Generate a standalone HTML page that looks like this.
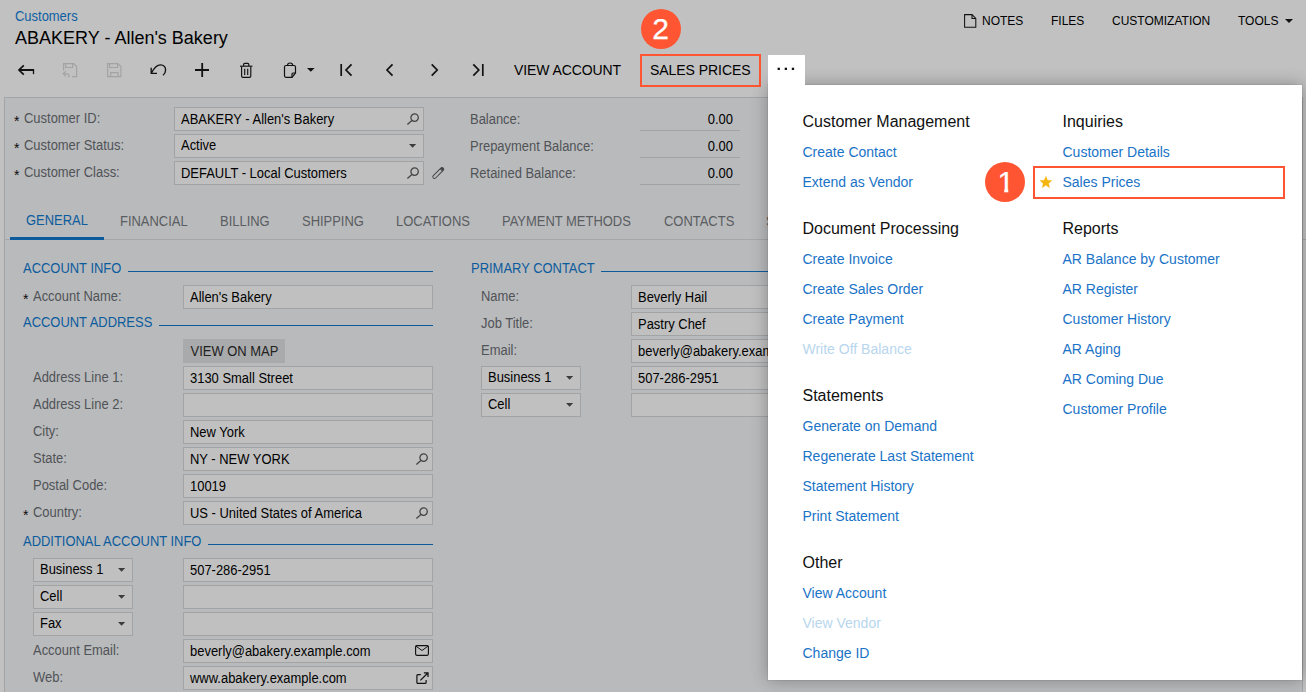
<!DOCTYPE html>
<html lang="en">
<head>
<meta charset="utf-8">
<title>Customers</title>
<style>
*{box-sizing:border-box;margin:0;padding:0}
html,body{width:1306px;height:692px;overflow:hidden}
body{background:#c1c1c1;font-family:"Liberation Sans",Arial,sans-serif;font-size:13px;color:#000;position:relative}
.abs{position:absolute;white-space:nowrap}
svg{position:absolute;overflow:visible}
.crumb{left:15px;top:8px;font-size:14px;color:#0d60a4;line-height:16px;transform:scaleX(.925);transform-origin:0 0}
.title{left:15px;top:28px;font-size:18px;line-height:21px;color:#000}
.tb{top:61px;height:18px;line-height:18px;font-size:14px;color:#000}
.top{top:14px;font-size:12px;line-height:15px;color:#000}
.panel{left:4px;top:97px;width:1299px;height:610px;background:#b9babc;border:1px solid #a3a4a6}
.lbl{font-size:14px;line-height:16px;color:#505357;transform:scaleX(.925);transform-origin:0 0}
.star{font-size:14px;line-height:16px;color:#0a0a0a}
.inp{height:24px;border:1px solid #a2a3a5;background:#c0c0c0;font-size:14px;line-height:24px;padding-left:6px;color:#000;overflow:hidden}
.inp span{display:inline-block;transform:scaleX(.925);transform-origin:0 50%;line-height:22px;vertical-align:top}
.inp.sel span{margin-top:-1px}
.val{font-size:14px;line-height:16px;color:#000;text-align:right;transform:scaleX(.925);transform-origin:100% 0}
.uline{height:1px;background:#a2a3a5}
.tab{top:213px;font-size:14px;line-height:16px;color:#5a5d61;transform:scaleX(.925);transform-origin:0 0}
.tab.act{color:#0c5c9d;top:212px}
.sec{font-size:14px;line-height:16px;color:#0c5c9d;transform:scaleX(.925);transform-origin:0 0}
.sline{height:1px;background:#0c5c9d}
.caret{width:0;height:0;border-left:4px solid transparent;border-right:4px solid transparent;border-top:4px solid #333}
.btn{height:24px;background:#a9aaab;font-size:14px;line-height:25px;text-align:center;color:#222}
.btn span{display:inline-block;transform:scaleX(.925)}
.popup{left:768px;top:85px;width:534px;height:595px;background:#fff;box-shadow:0 0 0 1px rgba(0,0,0,.05),0 0 16px rgba(0,0,0,.3)}
.more{left:768px;top:55px;width:37px;height:31px;background:#fff}
.h{font-size:16px;line-height:19px;color:#111}
.a{font-size:14px;line-height:17px;color:#1a73c7}
.a.dis{color:#b8d6ee}
.obox{border:2px solid #ff5533}
.badge{width:40px;height:40px;border-radius:50%;background:#ff5533;color:#fff;font-size:30px;line-height:40px;text-align:center;-webkit-text-stroke:0.25px #fff}
.badge span{display:inline-block;transform:none}
</style>
</head>
<body>
<div class="abs crumb">Customers</div>
<div class="abs title">ABAKERY - Allen's Bakery</div>
<svg style="left:963px;top:13px" width="15" height="16" viewBox="0 0 15 16"><path d="M1.6 1.6h7.4l3.8 3.8v8.8H1.6z" fill="none" stroke="#111" stroke-width="1.05"/><path d="M9 1.6v3.8h3.8" fill="none" stroke="#111" stroke-width="1.05"/></svg>
<div class="abs top" style="left:982px">NOTES</div>
<div class="abs top" style="left:1051px">FILES</div>
<div class="abs top" style="left:1112px">CUSTOMIZATION</div>
<div class="abs top" style="left:1238px">TOOLS</div>
<div class="abs caret" style="left:1285px;top:19px;border-left-width:4px;border-right-width:4px;border-top-width:4px;border-top-color:#111"></div>
<svg style="left:0;top:50px" width="520" height="40" viewBox="0 50 520 40" fill="none" stroke="#111" stroke-width="2">
<path d="M23.8 65.4 L19 70 L23.8 74.6" stroke-width="1.7"/><path d="M19.2 70 H34.1" stroke-width="2"/><path d="M33.5 70V74.2" stroke-width="1.3"/>
<g stroke="#a3a3a3" stroke-width="1.2"><path d="M63.6 70.5V63.6h10l3 3v10h-4.6"/><path d="M65.6 63.6v3.9h7v-3.9"/><path d="M65.8 71.2l-2.6 2.6 2.6 2.6M63.4 73.8h4.2q1.2 0 1.2 1.2v2.4"/></g>
<g stroke="#a3a3a3" stroke-width="1.2"><path d="M107.6 63.6h10.3l3 3v10h-13.3z"/><path d="M109.6 63.6v3.9h8v-3.9"/><path d="M110.6 76.6v-4h7.4v4"/></g>
<path d="M151.2 67.8 V73.3 H157 M151.6 72.8 C154 68 157 64.8 160.5 64.8 C164 64.8 165.6 67.6 165.6 70 C165.6 72 164.6 74 163 75.3" stroke-width="1.35"/>
<path d="M195 70H209M202.2 63V77" stroke-width="1.8"/>
<g stroke-width="1.15"><path d="M240 66.2H252.4"/><path d="M243.6 66v-1.6q0-1 1-1h3.2q1 0 1 1V66"/><path d="M241.6 66.4V76q0 1.3 1.3 1.3h6.6q1.3 0 1.3-1.3V66.4"/><path d="M244.7 68.8V75M247.7 68.8V75"/></g>
<g stroke-width="1.2"><path d="M292 77.3H286q-1.5 0-1.5-1.5V67q0-1.5 1.5-1.5h8q1.5 0 1.5 1.5V73z"/><path d="M292 77.3V74q0-1 1-1h2.5"/><path d="M287.5 65.3q0-2.3 2.6-2.3t2.6 2.3"/></g>
<path d="M307 68h7.6l-3.8 3.8z" fill="#111" stroke="none"/>
<path d="M341.2 64V76M351.5 64.3L346 70l5.5 5.7" stroke-width="1.7"/>
<path d="M392.5 64.3L387 70l5.5 5.7" stroke-width="1.7"/>
<path d="M431.7 64.3L437.2 70l-5.5 5.7" stroke-width="1.7"/>
<path d="M473.3 64.3L478.8 70l-5.5 5.7M482.8 64V76" stroke-width="1.7"/>
</svg>
<div class="abs tb" style="left:514px;letter-spacing:-0.1px">VIEW ACCOUNT</div>
<div class="abs tb" style="left:650px;letter-spacing:-0.05px">SALES PRICES</div>
<div class="abs obox" style="left:640px;top:54px;width:121px;height:33px"></div>
<div class="abs badge" style="left:640.5px;top:9px"><span>2</span></div>
<div class="abs panel"></div>
<div class="abs star" style="left:14px;top:113px">*</div>
<div class="abs lbl" style="left:24px;top:110px">Customer ID:</div>
<div class="abs star" style="left:14px;top:140px">*</div>
<div class="abs lbl" style="left:24px;top:137px">Customer Status:</div>
<div class="abs star" style="left:14px;top:167px">*</div>
<div class="abs lbl" style="left:24px;top:164px">Customer Class:</div>
<div class="abs inp" style="left:174px;top:107px;width:250px"><span>ABAKERY - Allen's Bakery</span><svg style="right:3px;top:5px" width="14" height="13" viewBox="0 0 14 13"><circle cx="8.6" cy="4.6" r="3.7" fill="none" stroke="#444" stroke-width="1.3"/><path d="M5.9 7.4L1.4 11.6" stroke="#444" stroke-width="1.3"/></svg></div>
<div class="abs inp sel" style="left:174px;top:134px;width:250px"><span>Active</span><svg style="right:7px;top:8.8px" width="7.2" height="3.7" viewBox="0 0 7.2 3.7"><polygon points="0,0 7.2,0 3.6,3.7" fill="#3c3c3c"/></svg></div>
<div class="abs inp" style="left:174px;top:161px;width:250px"><span>DEFAULT - Local Customers</span><svg style="right:3px;top:5px" width="14" height="13" viewBox="0 0 14 13"><circle cx="8.6" cy="4.6" r="3.7" fill="none" stroke="#444" stroke-width="1.3"/><path d="M5.9 7.4L1.4 11.6" stroke="#444" stroke-width="1.3"/></svg></div>
<svg style="left:431px;top:166px" width="15" height="15" viewBox="0 0 15 15"><g transform="rotate(-45 7.2 7)"><rect x="0.2" y="5.4" width="14" height="3.3" rx="1.65" fill="none" stroke="#444" stroke-width="1"/><path d="M11.6 5.4v3.3" stroke="#444" stroke-width="1"/><rect x="12" y="5.4" width="2.2" height="3.3" rx="1.1" fill="#444"/></g></svg>
<div class="abs lbl" style="left:470px;top:111px">Balance:</div>
<div class="abs val" style="left:640px;top:111px;width:93px">0.00</div>
<div class="abs uline" style="left:640px;top:130px;width:100px"></div>
<div class="abs lbl" style="left:470px;top:138px">Prepayment Balance:</div>
<div class="abs val" style="left:640px;top:138px;width:93px">0.00</div>
<div class="abs uline" style="left:640px;top:157px;width:100px"></div>
<div class="abs lbl" style="left:470px;top:165px">Retained Balance:</div>
<div class="abs val" style="left:640px;top:165px;width:93px">0.00</div>
<div class="abs uline" style="left:640px;top:184px;width:100px"></div>
<div class="abs tab act" style="left:26px">GENERAL</div>
<div class="abs tab" style="left:120px">FINANCIAL</div>
<div class="abs tab" style="left:220px">BILLING</div>
<div class="abs tab" style="left:302px">SHIPPING</div>
<div class="abs tab" style="left:396px">LOCATIONS</div>
<div class="abs tab" style="left:502px">PAYMENT METHODS</div>
<div class="abs tab" style="left:664px">CONTACTS</div>
<div class="abs tab" style="left:766px">SALESPERSONS</div>
<div class="abs" style="left:5px;top:239px;width:1301px;height:1px;background:#a6a7a9"></div>
<div class="abs" style="left:10px;top:237px;width:94px;height:3px;background:#0c5c9d"></div>
<div class="abs sec" style="left:23px;top:260px">ACCOUNT INFO</div>
<div class="abs sline" style="left:128px;top:271px;width:305px"></div>
<div class="abs star" style="left:23px;top:291px">*</div>
<div class="abs lbl" style="left:33px;top:288px">Account Name:</div>
<div class="abs inp" style="left:183px;top:285px;width:250px"><span>Allen's Bakery</span></div>
<div class="abs sec" style="left:23px;top:314px">ACCOUNT ADDRESS</div>
<div class="abs sline" style="left:159px;top:325px;width:274px"></div>
<div class="abs btn" style="left:183px;top:339px;width:102px"><span>VIEW ON MAP</span></div>
<div class="abs lbl" style="left:33px;top:369px">Address Line 1:</div>
<div class="abs inp" style="left:183px;top:366px;width:250px"><span>3130 Small Street</span></div>
<div class="abs lbl" style="left:33px;top:396px">Address Line 2:</div>
<div class="abs inp" style="left:183px;top:393px;width:250px"></div>
<div class="abs lbl" style="left:33px;top:423px">City:</div>
<div class="abs inp" style="left:183px;top:420px;width:250px"><span>New York</span></div>
<div class="abs lbl" style="left:33px;top:450px">State:</div>
<div class="abs inp" style="left:183px;top:447px;width:250px"><span>NY - NEW YORK</span><svg style="right:3px;top:5px" width="14" height="13" viewBox="0 0 14 13"><circle cx="8.6" cy="4.6" r="3.7" fill="none" stroke="#444" stroke-width="1.3"/><path d="M5.9 7.4L1.4 11.6" stroke="#444" stroke-width="1.3"/></svg></div>
<div class="abs lbl" style="left:33px;top:477px">Postal Code:</div>
<div class="abs inp" style="left:183px;top:474px;width:250px"><span>10019</span></div>
<div class="abs star" style="left:23px;top:507px">*</div>
<div class="abs lbl" style="left:33px;top:504px">Country:</div>
<div class="abs inp" style="left:183px;top:501px;width:250px"><span>US - United States of America</span><svg style="right:3px;top:5px" width="14" height="13" viewBox="0 0 14 13"><circle cx="8.6" cy="4.6" r="3.7" fill="none" stroke="#444" stroke-width="1.3"/><path d="M5.9 7.4L1.4 11.6" stroke="#444" stroke-width="1.3"/></svg></div>
<div class="abs sec" style="left:23px;top:533px">ADDITIONAL ACCOUNT INFO</div>
<div class="abs sline" style="left:208px;top:544px;width:225px"></div>
<div class="abs inp sel" style="left:33px;top:558px;width:100px"><span>Business 1</span><svg style="right:6.7px;top:8.8px" width="7.2" height="3.7" viewBox="0 0 7.2 3.7"><polygon points="0,0 7.2,0 3.6,3.7" fill="#3c3c3c"/></svg></div>
<div class="abs inp" style="left:183px;top:558px;width:250px"><span>507-286-2951</span></div>
<div class="abs inp sel" style="left:33px;top:585px;width:100px"><span>Cell</span><svg style="right:6.7px;top:8.8px" width="7.2" height="3.7" viewBox="0 0 7.2 3.7"><polygon points="0,0 7.2,0 3.6,3.7" fill="#3c3c3c"/></svg></div>
<div class="abs inp" style="left:183px;top:585px;width:250px"></div>
<div class="abs inp sel" style="left:33px;top:612px;width:100px"><span>Fax</span><svg style="right:6.7px;top:8.8px" width="7.2" height="3.7" viewBox="0 0 7.2 3.7"><polygon points="0,0 7.2,0 3.6,3.7" fill="#3c3c3c"/></svg></div>
<div class="abs inp" style="left:183px;top:612px;width:250px"></div>
<div class="abs lbl" style="left:33px;top:642px">Account Email:</div>
<div class="abs inp" style="left:183px;top:639px;width:250px"><span>beverly@abakery.example.com</span><svg style="right:3px;top:5px" width="14" height="11" viewBox="0 0 14 11"><rect x="0.6" y="0.6" width="12.8" height="9.7" rx="1.2" fill="none" stroke="#111" stroke-width="1.15"/><path d="M0.9 1.1l6.1 4.4 6.1-4.4" fill="none" stroke="#111" stroke-width="1"/></svg></div>
<div class="abs lbl" style="left:33px;top:669px">Web:</div>
<div class="abs inp" style="left:183px;top:666px;width:250px"><span>www.abakery.example.com</span><svg style="right:3px;top:5px" width="14" height="14" viewBox="0 0 14 14"><path d="M5.8 2.7H2.9q-1 0-1 1v6.7q0 1 1 1h7.2q1 0 1-1V8" fill="none" stroke="#111" stroke-width="1.2"/><path d="M5.4 8.4L12.8 1M8.9 0.8h4.1v4.1" fill="none" stroke="#111" stroke-width="1.25"/></svg></div>
<div class="abs sec" style="left:471px;top:260px">PRIMARY CONTACT</div>
<div class="abs sline" style="left:601px;top:271px;width:280px"></div>
<div class="abs lbl" style="left:481px;top:288px">Name:</div>
<div class="abs inp" style="left:631px;top:285px;width:250px"><span>Beverly Hail</span></div>
<div class="abs lbl" style="left:481px;top:315px">Job Title:</div>
<div class="abs inp" style="left:631px;top:312px;width:250px"><span>Pastry Chef</span></div>
<div class="abs lbl" style="left:481px;top:342px">Email:</div>
<div class="abs inp" style="left:631px;top:339px;width:250px"><span>beverly@abakery.example.com</span></div>
<div class="abs inp sel" style="left:481px;top:366px;width:100px"><span>Business 1</span><svg style="right:6.7px;top:8.8px" width="7.2" height="3.7" viewBox="0 0 7.2 3.7"><polygon points="0,0 7.2,0 3.6,3.7" fill="#3c3c3c"/></svg></div>
<div class="abs inp" style="left:631px;top:366px;width:250px"><span>507-286-2951</span></div>
<div class="abs inp sel" style="left:481px;top:393px;width:100px"><span>Cell</span><svg style="right:6.7px;top:8.8px" width="7.2" height="3.7" viewBox="0 0 7.2 3.7"><polygon points="0,0 7.2,0 3.6,3.7" fill="#3c3c3c"/></svg></div>
<div class="abs inp" style="left:631px;top:393px;width:250px"></div>
<div class="abs popup"></div>
<div class="abs more"></div>
<svg style="left:776px;top:66px" width="20" height="6" viewBox="0 0 20 6"><rect x="1.6" y="1.7" width="2.3" height="2.3" fill="#111"/><rect x="8.7" y="1.7" width="2.3" height="2.3" fill="#111"/><rect x="15.8" y="1.7" width="2.3" height="2.3" fill="#111"/></svg>
<div class="abs h" style="left:802.5px;top:112px">Customer Management</div>
<div class="abs a" style="left:802.5px;top:144px">Create Contact</div>
<div class="abs a" style="left:802.5px;top:174px">Extend as Vendor</div>
<div class="abs h" style="left:802.5px;top:219px">Document Processing</div>
<div class="abs a" style="left:802.5px;top:251px">Create Invoice</div>
<div class="abs a" style="left:802.5px;top:281px">Create Sales Order</div>
<div class="abs a" style="left:802.5px;top:311px">Create Payment</div>
<div class="abs a dis" style="left:802.5px;top:341px">Write Off Balance</div>
<div class="abs h" style="left:802.5px;top:386px">Statements</div>
<div class="abs a" style="left:802.5px;top:418px">Generate on Demand</div>
<div class="abs a" style="left:802.5px;top:448px">Regenerate Last Statement</div>
<div class="abs a" style="left:802.5px;top:478px">Statement History</div>
<div class="abs a" style="left:802.5px;top:508px">Print Statement</div>
<div class="abs h" style="left:802.5px;top:553px">Other</div>
<div class="abs a" style="left:802.5px;top:585px">View Account</div>
<div class="abs a dis" style="left:802.5px;top:615px">View Vendor</div>
<div class="abs a" style="left:802.5px;top:645px">Change ID</div>
<div class="abs h" style="left:1062.5px;top:112px">Inquiries</div>
<div class="abs a" style="left:1062.5px;top:144px">Customer Details</div>
<div class="abs a" style="left:1062.5px;top:174px">Sales Prices</div>
<div class="abs h" style="left:1062.5px;top:219px">Reports</div>
<div class="abs a" style="left:1062.5px;top:251px">AR Balance by Customer</div>
<div class="abs a" style="left:1062.5px;top:281px">AR Register</div>
<div class="abs a" style="left:1062.5px;top:311px">Customer History</div>
<div class="abs a" style="left:1062.5px;top:341px">AR Aging</div>
<div class="abs a" style="left:1062.5px;top:371px">AR Coming Due</div>
<div class="abs a" style="left:1062.5px;top:401px">Customer Profile</div>
<svg style="left:1036px;top:172px" width="20" height="20" viewBox="0 0 20 20"><polygon points="9.90,4.15 11.58,8.19 15.94,8.54 12.62,11.38 13.63,15.64 9.90,13.36 6.17,15.64 7.18,11.38 3.86,8.54 8.22,8.19" fill="#f5b50f" stroke="#f5b50f" stroke-width="0.3" stroke-linejoin="round"/></svg>
<div class="abs obox" style="left:1033px;top:166px;width:252px;height:33px"></div>
<div class="abs badge" style="left:985px;top:161.5px"><span style="margin-left:1.5px;clip-path:polygon(0 0,100% 0,100% 27px,10.9px 27px,10.9px 100%,6.8px 100%,6.8px 27px,0 27px)">1</span></div>
</body>
</html>
